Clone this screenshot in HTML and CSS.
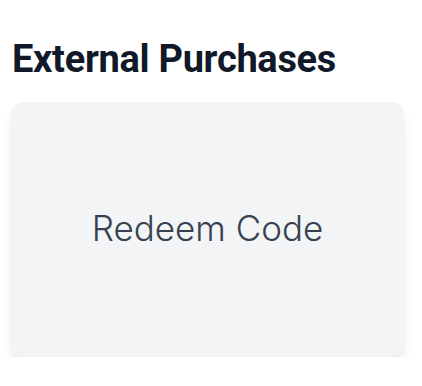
FILE: index.html
```html
<!DOCTYPE html>
<html lang="en"><head><meta charset="utf-8"><title>External Purchases</title><link rel="stylesheet" href="styles.css"></head>
<body>
<section class="section">
  <h2 class="title">External Purchases</h2>
  <button class="card" type="button">Redeem Code</button>
</section>
</body></html>
```
FILE: styles.css
```css
html,body{margin:0;padding:0;background:#fff;}
.section{padding:37px 18px 0 11px;display:flex;flex-direction:column;gap:21px;}
.title{margin:0;font-family:"Roboto",sans-serif;font-weight:700;font-size:38px;line-height:44px;letter-spacing:-0.3px;color:#111827;padding-left:1px;}
.card{display:flex;align-items:center;justify-content:center;height:255px;width:393px;border:0;border-radius:12px;background:#f3f4f6;box-shadow:0 10px 15px -3px rgba(0,0,0,.1),0 4px 6px -4px rgba(0,0,0,.1);font-family:"Inter",sans-serif;font-weight:300;font-size:35px;color:#374151;padding:0 0 4px;}
```
